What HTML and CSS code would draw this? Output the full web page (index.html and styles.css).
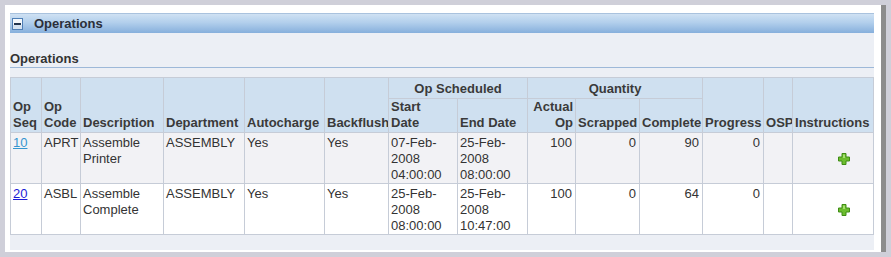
FILE: index.html
```html
<!DOCTYPE html>
<html>
<head>
<meta charset="utf-8">
<link rel="stylesheet" href="styles.css">
</head>
<body>
<div class="frame">
  <div class="bar">
    <svg class="toggle" width="11" height="12" viewBox="0 0 11 12">
      <rect x="0.5" y="0.5" width="10" height="11" fill="#f4f8fc" stroke="#4f7fb6"/>
      <rect x="1" y="7" width="9" height="4" fill="#d4e2f1"/>
      <rect x="2" y="5" width="7" height="2" fill="#22344e"/>
    </svg>
    <span class="bar-title">Operations</span>
  </div>
  <div class="panel">
    <div class="subhead">Operations</div>
    <table class="ops">
      <colgroup>
        <col class="c1"><col class="c2"><col class="c3"><col class="c4"><col class="c5"><col class="c6"><col class="c7"><col class="c8"><col class="c9"><col class="c10"><col class="c11"><col class="c12"><col class="c13"><col class="c14">
      </colgroup>
      <thead>
        <tr class="hrow1">
          <th rowspan="2" class="bot">Op<br>Seq</th>
          <th rowspan="2" class="bot">Op<br>Code</th>
          <th rowspan="2" class="bot">Description</th>
          <th rowspan="2" class="bot">Department</th>
          <th rowspan="2" class="bot">Autocharge</th>
          <th rowspan="2" class="bot">Backflush</th>
          <th colspan="2" class="grp">Op Scheduled</th>
          <th colspan="3" class="grp">Quantity</th>
          <th rowspan="2" class="bot">Progress</th>
          <th rowspan="2" class="bot">OSP</th>
          <th rowspan="2" class="bot">Instructions</th>
        </tr>
        <tr class="hrow2">
          <th class="bot">Start<br>Date</th>
          <th class="bot">End Date</th>
          <th class="bot num">Actual<br>Op</th>
          <th class="bot">Scrapped</th>
          <th class="bot">Complete</th>
        </tr>
      </thead>
      <tbody>
        <tr class="odd">
          <td><a href="#" class="visited">10</a></td>
          <td>APRT</td>
          <td>Assemble<br>Printer</td>
          <td>ASSEMBLY</td>
          <td>Yes</td>
          <td>Yes</td>
          <td>07-Feb-<br>2008<br>04:00:00</td>
          <td>25-Feb-<br>2008<br>08:00:00</td>
          <td class="num">100</td>
          <td class="num">0</td>
          <td class="num">90</td>
          <td class="num">0</td>
          <td></td>
          <td class="icon"><svg width="12" height="12" viewBox="0 0 12 12"><path d="M4 0.5h4v3.5h3.5v4h-3.5v3.5h-4v-3.5h-3.5v-4h3.5z" fill="#6cbd2e" stroke="#3f8c14"/><path d="M5 1.5h2v3.5h-2z" fill="#a6e070"/></svg></td>
        </tr>
        <tr class="even">
          <td><a href="#">20</a></td>
          <td>ASBL</td>
          <td>Assemble<br>Complete</td>
          <td>ASSEMBLY</td>
          <td>Yes</td>
          <td>Yes</td>
          <td>25-Feb-<br>2008<br>08:00:00</td>
          <td>25-Feb-<br>2008<br>10:47:00</td>
          <td class="num">100</td>
          <td class="num">0</td>
          <td class="num">64</td>
          <td class="num">0</td>
          <td></td>
          <td class="icon"><svg width="12" height="12" viewBox="0 0 12 12"><path d="M4 0.5h4v3.5h3.5v4h-3.5v3.5h-4v-3.5h-3.5v-4h3.5z" fill="#6cbd2e" stroke="#3f8c14"/><path d="M5 1.5h2v3.5h-2z" fill="#a6e070"/></svg></td>
        </tr>
      </tbody>
    </table>
  </div>
</div>
</body>
</html>
```
FILE: styles.css
```css
html, body {
  margin: 0;
  padding: 0;
}
body {
  background: #cfcfd9;
  padding: 5px 5px 6px 5px;
  font-family: "Liberation Sans", Arial, sans-serif;
  font-size: 13px;
  color: #333;
}
.frame {
  background: #fff;
  border-right: 5px solid #8c8c8c;
  padding: 8px 7px 2px 5px;
}
.bar {
  height: 20px;
  box-sizing: border-box;
  border-top: 1px solid #a9c2de;
  background: linear-gradient(#cfe1f3, #b2cfec 45%, #86afdc);
  display: flex;
  align-items: center;
  padding-left: 2px;
}
.toggle {
  display: block;
  margin-top: 1px;
}
.bar-title {
  font-weight: bold;
  color: #2b2f3a;
  margin-left: 11px;
  line-height: 16px;
}
.panel {
  background: #eceff5;
  padding: 0 0 15px 0;
}
.subhead {
  font-weight: bold;
  color: #333;
  padding-top: 18px;
  line-height: 16px;
  border-bottom: 1px solid #9db8d8;
  margin-bottom: 9px;
}
.ops {
  border-collapse: collapse;
  table-layout: fixed;
  width: 864px;
  line-height: 16px;
}
.ops th, .ops td {
  border: 1px solid #c6ccd7;
  overflow: hidden;
}
.c1 { width: 31px; }
.c2 { width: 39px; }
.c3 { width: 83px; }
.c4 { width: 81px; }
.c5 { width: 80px; }
.c6 { width: 64px; }
.c7 { width: 69px; }
.c8 { width: 70px; }
.c9 { width: 48px; }
.c10 { width: 64px; }
.c11 { width: 63px; }
.c12 { width: 61px; }
.c13 { width: 29px; }
.c14 { width: 81px; }
.ops th {
  background: #cfe0f0;
  color: #3a3a3a;
  font-weight: bold;
  text-align: left;
  white-space: nowrap;
  padding: 0 2px 1px 2px;
}
.ops th.bot {
  vertical-align: bottom;
}
.ops th.grp {
  text-align: center;
  padding: 2px 2px 1px 2px;
  height: 17px;
}
.ops th.num {
  text-align: right;
}
.ops td {
  vertical-align: top;
  padding: 2px 2px 0 2px;
  height: 48px;
  color: #333;
}
.ops td.num {
  text-align: right;
  padding-right: 3px;
}
.ops td.icon {
  vertical-align: middle;
  padding-left: 45px;
  padding-top: 1px;
}
.ops td.icon svg {
  display: block;
}
.odd td {
  background: #f2f2f5;
}
.even td {
  background: #fff;
}
.ops a {
  color: #1c1cd6;
  text-decoration: underline;
}
.ops a.visited {
  color: #3596cf;
}
```
